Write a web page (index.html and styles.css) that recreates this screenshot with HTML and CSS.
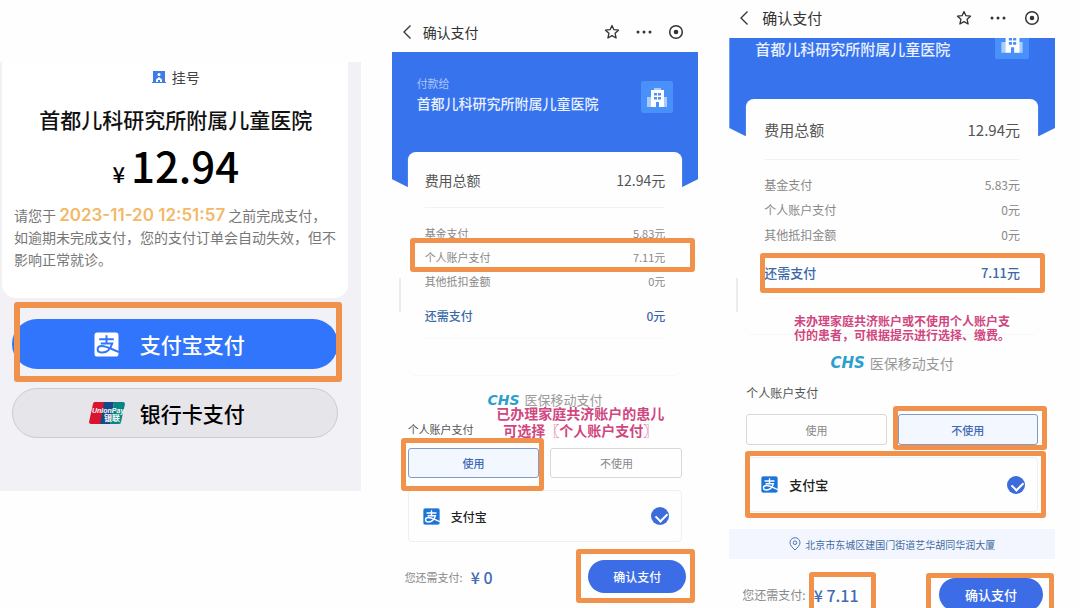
FILE: index.html
```html
<!DOCTYPE html>
<html lang="zh-CN">
<head>
    <meta charset="UTF-8">
    <meta name="viewport" content="width=device-width, initial-scale=1.0">
    <title>确认支付</title>
    <link rel="stylesheet" href="styles.css">
</head>
<body>
    <svg class="sprite" aria-hidden="true">
        <symbol id="back" viewBox="0 0 10 16"><path d="M8.5 1.5L2 8l6.500 6.500" fill="none" stroke="#333" stroke-width="1.300"/></symbol>
        <symbol id="star" viewBox="0 0 16 16"><path d="M8 1.500l1.900 4.200 4.600.5-3.400 3.100 1 4.700L8 11.600 3.900 14l1-4.700L1.500 6.200l4.600-.5z" fill="none" stroke="#333" stroke-width="1.300" stroke-linejoin="round"/></symbol>
        <symbol id="more" viewBox="0 0 16 16"><g fill="#333"><circle cx="2" cy="8" r="1.500"/><circle cx="8" cy="8" r="1.500"/><circle cx="14" cy="8" r="1.500"/></g></symbol>
        <symbol id="target" viewBox="0 0 16 16"><circle cx="8" cy="8" r="6.300" fill="none" stroke="#333" stroke-width="1.500"/><circle cx="8" cy="8" r="2.300" fill="#333"/></symbol>
        <symbol id="hospital" viewBox="0 0 32 32">
            <rect width="32" height="32" rx="2" fill="#4a90fa"/>
            <path d="M6 16h5v10H6zM21 16h5v10h-5z" fill="#a9cdfd"/>
            <path d="M10 9h3V7h7v2h3v17h-5v-5h-3v5h-5z" fill="#fff"/>
            <path d="M13 7h7v2h-7z" fill="#a9cdfd"/>
            <path d="M13 12h3v2.500h-3zM17 12h3v2.500h-3zM13 16h3v2.500h-3zM17 16h3v2.500h-3z" fill="#4a90fa"/>
        </symbol>
        <symbol id="alipay" viewBox="0 0 24 24">
            <rect width="24" height="24" rx="3" fill="currentColor"/>
            <path d="M5 7h14M12 3v8M6.500 11h11c-1.500 4.800-5 8.700-9.500 8.700-2.700 0-4.500-1.300-4.500-3.200s1.700-3.100 4.200-3.100c4.100 0 9.300 3.100 16.300 5.900" fill="none" stroke-width="1.900"/>
        </symbol>
        <symbol id="pin" viewBox="0 0 12 14"><path d="M6 13C3 10.200 1 8 1 5.700a5 5 0 0 1 10 0C11 8 9 10.200 6 13z" fill="none" stroke="#4a78ae"/><circle cx="6" cy="5.700" r="1.800" fill="none" stroke="#4a78ae"/></symbol>
    </svg>

    <main class="screens">
        <section class="order">
            <div class="order-card">
                <p class="order-type">
                    <svg width="14" height="14" viewBox="0 0 14 14"><path d="M1 1h12v11h1v1H0v-1h1z" fill="#3f7de8"/><circle cx="7" cy="4.500" r="1.500" fill="#fff"/><path d="M4 12V9.500L7 7l3 2.500V12H8v-2H6v2z" fill="#fff"/></svg>
                    挂号
                </p>
                <h1>首都儿科研究所附属儿童医院</h1>
                <p class="order-amount"><small>¥</small>12.94</p>
                <p class="order-tip">请您于 <time>2023-11-20 12:51:57</time> 之前完成支付，<br>如逾期未完成支付，您的支付订单会自动失效，但不<br>影响正常就诊。</p>
            </div>
            <div class="order-actions">
                <button type="button" class="pay-btn alipay-btn">
                    <span class="pay-icon"><svg width="25" height="25"><use href="#alipay"/></svg></span>
                    支付宝支付
                    <span class="mark mark-alipay"></span>
                </button>
                <button type="button" class="pay-btn bank-btn">
                    <span class="pay-icon">
                        <svg width="36" height="22" viewBox="0 0 36 22">
                            <path d="M6 0h10l-4 22H2a2 2 0 0 1-2-2L4 2a2 2 0 0 1 2-2z" fill="#d8142f"/>
                            <path d="M15 0h10l-4 22H11z" fill="#164a86"/>
                            <path d="M25 0h9a2 2 0 0 1 2 2l-4 18a2 2 0 0 1-2 2h-9z" fill="#0b8584"/>
                            <text x="3" y="11" class="union-en">UnionPay</text>
                            <text x="15" y="19" class="union-cn">银联</text>
                        </svg>
                    </span>
                    银行卡支付
                </button>
            </div>
        </section>

        <section class="confirm confirm-use">
            <header class="nav">
                <svg width="10" height="16"><use href="#back"/></svg>
                <h2>确认支付</h2>
                <svg width="16" height="16"><use href="#star"/></svg>
                <svg width="16" height="16"><use href="#more"/></svg>
                <svg width="16" height="16"><use href="#target"/></svg>
            </header>
            <div class="hero">
                <div class="payee">
                    <p>付款给</p>
                    <h3>首都儿科研究所附属儿童医院</h3>
                </div>
                <svg class="hospital" viewBox="0 0 32 32"><use href="#hospital"/></svg>
            </div>
            <dl class="bill">
                <div class="total"><dt>费用总额</dt><dd>12.94元</dd></div>
                <div><dt>基金支付</dt><dd>5.83元</dd></div>
                <div><dt>个人账户支付</dt><dd>7.11元</dd><span class="mark mark-account"></span></div>
                <div><dt>其他抵扣金额</dt><dd>0元</dd></div>
                <div class="due"><dt>还需支付</dt><dd>0元</dd></div>
            </dl>
            <div class="chs">
                <b>CHS</b> 医保移动支付
                <p class="note">已办理家庭共济账户的患儿<br>可选择〖个人账户支付〗</p>
            </div>
            <p class="label" id="account1">个人账户支付</p>
            <div class="options" role="radiogroup" aria-labelledby="account1">
                <label><input type="radio" name="account1" checked>使用<span class="mark mark-use"></span></label>
                <label><input type="radio" name="account1">不使用</label>
            </div>
            <label class="method">
                <svg width="17" height="17"><use href="#alipay"/></svg>
                支付宝
                <input type="radio" name="method1" checked>
            </label>
            <footer class="paybar">
                <span>您还需支付:</span>
                <strong>¥ 0</strong>
                <button type="button">确认支付<span class="mark mark-submit"></span></button>
            </footer>
        </section>

        <section class="confirm confirm-skip">
            <header class="nav">
                <svg width="10" height="16"><use href="#back"/></svg>
                <h2>确认支付</h2>
                <svg width="16" height="16"><use href="#star"/></svg>
                <svg width="16" height="16"><use href="#more"/></svg>
                <svg width="16" height="16"><use href="#target"/></svg>
            </header>
            <div class="hero">
                <div class="payee">
                    <h3>首都儿科研究所附属儿童医院</h3>
                </div>
                <svg class="hospital" viewBox="0 0 32 32"><use href="#hospital"/></svg>
            </div>
            <dl class="bill">
                <div class="total"><dt>费用总额</dt><dd>12.94元</dd></div>
                <div><dt>基金支付</dt><dd>5.83元</dd></div>
                <div><dt>个人账户支付</dt><dd>0元</dd></div>
                <div><dt>其他抵扣金额</dt><dd>0元</dd></div>
                <div class="due"><dt>还需支付</dt><dd>7.11元</dd><span class="mark mark-due"></span></div>
            </dl>
            <div class="chs">
                <b>CHS</b> 医保移动支付
                <p class="note">未办理家庭共济账户或不使用个人账户支<br>付的患者，可根据提示进行选择、缴费。</p>
            </div>
            <p class="label" id="account2">个人账户支付</p>
            <div class="options" role="radiogroup" aria-labelledby="account2">
                <label><input type="radio" name="account2">使用</label>
                <label><input type="radio" name="account2" checked>不使用<span class="mark mark-skip"></span></label>
            </div>
            <label class="method">
                <svg width="17" height="17"><use href="#alipay"/></svg>
                支付宝
                <input type="radio" name="method2" checked>
                <span class="mark mark-method"></span>
            </label>
            <p class="address"><svg width="12" height="14"><use href="#pin"/></svg>北京市东城区建国门街道艺华胡同华润大厦</p>
            <footer class="paybar">
                <span>您还需支付:</span>
                <strong>¥ 7.11<span class="mark mark-amount"></span></strong>
                <button type="button">确认支付<span class="mark mark-submit"></span></button>
            </footer>
        </section>
    </main>
</body>
</html>
```
FILE: styles.css
```css
* { margin: 0; padding: 0; box-sizing: border-box; }
body { font-family: "Noto Sans CJK SC", sans-serif; font-size: 14px; color: #333; background: #fefefe; height: 100vh; overflow: hidden; }
button { font-family: inherit; border: none; cursor: pointer; position: relative; }
svg { flex: none; display: block; }
.sprite { position: absolute; width: 0; height: 0; }
.screens { display: grid; grid-template-columns: 361fr 307fr 326fr; column-gap: 31px; padding-right: 25px; align-items: start; }

/* orange highlight frames */
.mark { position: absolute; border: 5px solid #f0914c; border-radius: 3px; pointer-events: none; z-index: 2; }
.mark-alipay { inset: -17px -4px -13px 2px; border-width: 6px; }
.mark-account { inset: -7px -30px -3px -15px; }
.mark-use { inset: -11px -6px -14px -8px; }
.mark-skip { inset: -9px -10px -6px -6px; }
.mark-due { inset: 6px -25px 5px -4px; }
.mark-method { inset: -7px -9px -7px -2px; }
.mark-amount { inset: -13px -17px -13px -5px; }
.mark-submit { inset: -11px -9px -10px -12px; }
.confirm-skip .mark-submit { inset: -5px -11px -5px -13px; }

/* order screen */
.order { margin-top: 62px; padding: 0 13px 53px 2px; background: #f2f2f6; }
.order-card { background: #fff; border-radius: 0 0 14px 14px; padding: 4px 10px 28px 12px; text-align: center; }
.order-type { display: flex; align-items: center; justify-content: center; gap: 6px; line-height: 22px; color: #444; }
.order-card h1 { font-size: 21px; font-weight: 500; line-height: 32px; margin-top: 15px; color: #111; }
.order-amount { font-size: 42px; font-weight: 500; line-height: 50px; margin-top: 5px; color: #000; }
.order-amount small { font-size: 22px; margin-right: 6px; }
.order-tip { text-align: left; line-height: 22px; margin-top: 6px; color: #777; white-space: nowrap; }
.order-tip time { font-family: Inter, sans-serif; font-size: 17px; font-weight: 600; color: #f3b968; }
.order-actions { display: grid; gap: 19px; padding: 21px 0 0 10px; margin-right: 10px; }
.pay-btn { display: flex; align-items: center; justify-content: center; gap: 15px; height: 50px; padding-right: 16px; border-radius: 25px; font-size: 21px; font-weight: 500; }
.pay-icon { display: flex; justify-content: center; width: 36px; }
.alipay-btn { background: #3275fd; color: #fff; }
.alipay-btn .pay-icon { stroke: #3275fd; }
.bank-btn { background: #e6e5e9; color: #000; border: 1px solid #cbcbd0; }
.union-en { font: italic bold 7px "Liberation Sans", sans-serif; fill: #fff; }
.union-cn { font-size: 8px; font-weight: bold; fill: #fff; }

/* confirm screens */
.confirm { --side: 16px; --inner: 17px; --text: 14px; --small: 11px; --mid: 12px; --row: 24px; position: relative; }
.confirm-skip { --side: 17px; --inner: 18px; --text: 15px; --small: 12px; --mid: 13px; --row: 25px; }
.confirm::before { content: ""; position: absolute; left: 7px; top: 278px; width: 2px; height: 34px; background: #ebebeb; }
.nav { display: flex; align-items: center; gap: 16px; height: 38px; padding: 0 14px 2px 10px; }
.confirm-use .nav { height: 52px; padding-top: 14px; }
.nav h2 { font-size: var(--text); line-height: 20px; font-weight: 400; margin: 0 auto 0 -5px; }
.confirm-skip .nav { gap: 18px; padding-right: 15px; }
.hero { display: flex; align-items: flex-end; justify-content: space-between; height: 135px; padding: 0 25px 74px; overflow: hidden; background: #3873ee; color: #e8f1ff;
    clip-path: polygon(0 0, 100% 0, 100% calc(100% - 8px), calc(100% - 16px) 100%, 16px 100%, 0 calc(100% - 8px)); }
.confirm-skip .hero { height: 98px; padding: 0 26px 77px; }
.payee { line-height: 20px; }
.payee p { font-size: var(--small); color: #a8c5fb; }
.payee h3 { font-size: var(--text); font-weight: 500; }
.hospital { width: 32px; height: 32px; }
.confirm-skip .hospital { width: 34px; height: 34px; }

.bill { position: relative; margin: -35px var(--side) 0; padding: 0 var(--inner) 36px; background: #fefefe; border-radius: 8px; box-shadow: 0 1px 1px #f8f8f8; }
.confirm-skip .bill { margin-top: -37px; padding-bottom: 35px; }
.bill div { position: relative; display: flex; justify-content: space-between; align-items: center; height: var(--row); font-size: var(--small); color: #888; }
.bill .total { height: 56px; padding-top: 1px; margin-bottom: 13px; font-size: var(--text); color: #555; border-bottom: 1px solid #f2f2f2; }
.confirm-skip .bill .total { height: 61px; margin-bottom: 12px; }
.bill .due { height: 46px; font-size: var(--mid); font-weight: 500; color: #3b69a8; border-bottom: 1px solid #f9f9f9; }
.confirm-skip .bill .due { height: 52px; }

.chs { position: relative; display: flex; justify-content: center; gap: 5px; margin: 15px var(--side) 0; font-size: 13px; line-height: 20px; color: #999; }
.chs b { font: italic bold 14px/20px "DejaVu Sans", sans-serif; color: #2b9fce; }
.confirm-skip .chs { margin-top: 19px; font-size: 14px; }
.confirm-skip .chs b { font-size: 15px; }
.note { position: absolute; top: 15px; right: 18px; font-size: 14px; font-weight: 700; line-height: 17px; text-align: center; color: #d0467f; z-index: 1; }
.confirm-skip .note { top: -39px; right: 28px; font-size: 12px; line-height: 14px; text-align: left; }
.label { margin: 9px var(--side); font-size: var(--small); line-height: 20px; color: #555; }
.confirm-skip .label { margin: 10px var(--side) 11px; }
.options { display: grid; grid-template-columns: 1fr 1fr; gap: 11px; margin: 0 var(--side); }
.options label { position: relative; height: 30px; display: flex; align-items: center; justify-content: center; font-size: 11px; color: #888; border: 1px solid #d8d8d8; border-radius: 3px; cursor: pointer; }
.confirm-skip .options label { height: 31px; }
.options input { appearance: none; position: absolute; inset: 0; cursor: pointer; }
.options label:has(input:checked) { background: #f3f7ff; border-color: #7f9bc9; color: #4068b3; font-weight: 500; }
.method { position: relative; display: flex; align-items: center; gap: 11px; height: 52px; margin: 12px var(--side) 0; padding: 0 12px 0 14px; font-size: var(--mid); font-weight: 500; color: #222; border: 1px solid #efefef; border-radius: 4px; }
.confirm-skip .method { height: 55px; }
.method svg { color: #1c74d8; stroke: #fff; }
.method input { appearance: none; position: relative; width: 18px; height: 18px; margin-left: auto; border-radius: 50%; background: #3c6bdc; }
.method input::after { content: ""; position: absolute; left: 5px; top: 5px; width: 9px; height: 6px; border: solid #fff; border-width: 0 0 2px 2px; transform: rotate(-45deg); }
.address { display: flex; align-items: center; justify-content: center; gap: 4px; height: 30px; margin-top: 17px; font-size: 10px; color: #3f6ba3; background: #f3f6fe; }
.paybar { display: flex; align-items: center; gap: 8px; margin-top: 18px; padding: 0 12px 0 13px; font-size: var(--small); color: #888; }
.confirm-skip .paybar { margin-top: 19px; }
.paybar strong { position: relative; font-size: 16px; line-height: 20px; font-weight: 500; color: #3f6cb5; }
.paybar button { width: 98px; height: 33px; margin-left: auto; border-radius: 17px; background: #3c6de6; color: #fff; font-size: var(--mid); font-weight: 500; }
.confirm-skip .paybar button { width: 104px; }
```
